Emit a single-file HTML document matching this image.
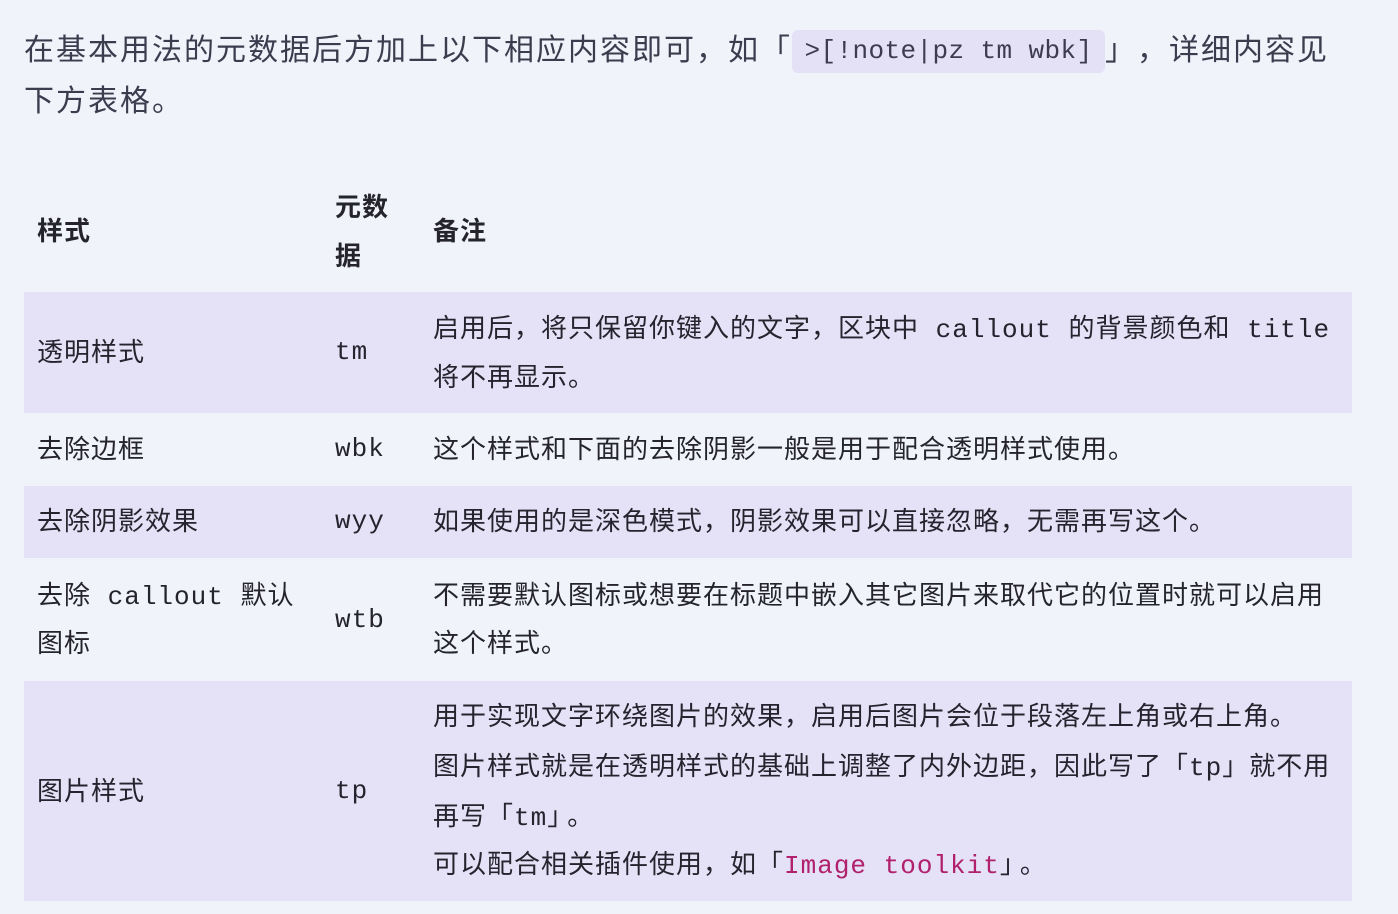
<!DOCTYPE html>
<html><head><meta charset="utf-8"><style>
body{margin:0;width:1398px;height:914px;background:#f0f3f9;position:relative;overflow:hidden;font-family:"Liberation Sans","Noto Sans CJK SC",sans-serif;}
.p{position:absolute;white-space:nowrap;font-size:30px;letter-spacing:2px;color:#3d3c4f;line-height:40px;}
.code{position:absolute;left:792px;top:30px;width:313px;height:43px;background:#e4e0f5;border-radius:6px;font-family:"Liberation Mono",monospace;font-size:26px;letter-spacing:0.4px;color:#3d3c4f;line-height:43px;text-align:center;}
.row{position:absolute;left:24px;width:1328px;background:#e5e1f6;}
.t{position:absolute;white-space:nowrap;font-size:26px;letter-spacing:1px;color:#25242e;line-height:36px;}
.m{font-family:"Liberation Mono",monospace;letter-spacing:1px;}
.b{font-weight:bold;}
.pk{color:#b0206c;}
</style></head><body>
<div class="p" style="left:24px;top:31px">在基本用法的元数据后方加上以下相应内容即可，如「</div>
<div class="code">&gt;[!note|pz tm wbk]</div>
<div class="p" style="left:1105px;top:31px">」</div>
<div class="p" style="left:1137px;top:31px">，详细内容见</div>
<div class="p" style="left:24px;top:82px">下方表格。</div>

<div class="row" style="top:292px;height:121px"></div>
<div class="row" style="top:486px;height:72px"></div>
<div class="row" style="top:681px;height:220px"></div>

<div class="t b" style="left:37px;top:213px">样式</div>
<div class="t b" style="left:335px;top:189px">元数</div>
<div class="t b" style="left:335px;top:238px">据</div>
<div class="t b" style="left:433px;top:213px">备注</div>

<div class="t" style="left:37px;top:334px">透明样式</div>
<div class="t m" style="left:335px;top:334px">tm</div>
<div class="t" style="left:433px;top:310px">启用后，将只保留你键入的文字，区块中<span class="m"> callout </span>的背景颜色和<span class="m"> title</span></div>
<div class="t" style="left:433px;top:359px">将不再显示。</div>

<div class="t" style="left:37px;top:431px">去除边框</div>
<div class="t m" style="left:335px;top:431px">wbk</div>
<div class="t" style="left:433px;top:431px">这个样式和下面的去除阴影一般是用于配合透明样式使用。</div>

<div class="t" style="left:37px;top:503px">去除阴影效果</div>
<div class="t m" style="left:335px;top:503px">wyy</div>
<div class="t" style="left:433px;top:503px">如果使用的是深色模式，阴影效果可以直接忽略，无需再写这个。</div>

<div class="t" style="left:37px;top:577px">去除<span class="m"> callout </span>默认</div>
<div class="t" style="left:37px;top:625px">图标</div>
<div class="t m" style="left:335px;top:602px">wtb</div>
<div class="t" style="left:433px;top:577px">不需要默认图标或想要在标题中嵌入其它图片来取代它的位置时就可以启用</div>
<div class="t" style="left:433px;top:625px">这个样式。</div>

<div class="t" style="left:37px;top:773px">图片样式</div>
<div class="t m" style="left:335px;top:773px">tp</div>
<div class="t" style="left:433px;top:698px">用于实现文字环绕图片的效果，启用后图片会位于段落左上角或右上角。</div>
<div class="t" style="left:433px;top:748px">图片样式就是在透明样式的基础上调整了内外边距，因此写了「<span class="m">tp</span>」就不用</div>
<div class="t" style="left:433px;top:798px">再写「<span class="m">tm</span>」<span style="margin-left:6px">。</span></div>
<div class="t" style="left:433px;top:846px">可以配合相关插件使用，如「<span class="m pk">Image toolkit</span>」<span style="margin-left:6px">。</span></div>
</body></html>
